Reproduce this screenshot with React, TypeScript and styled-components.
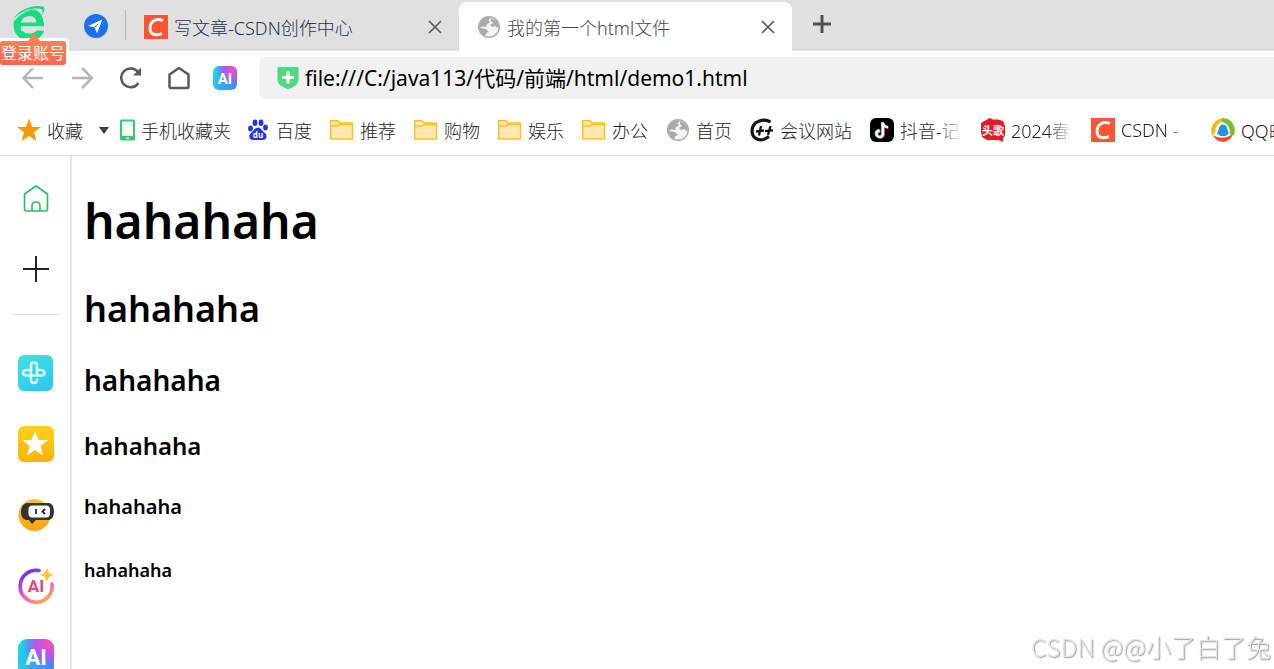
import React from 'react';
import styled, { createGlobalStyle } from 'styled-components';

const GlobalStyle = createGlobalStyle`
  * { box-sizing: border-box; }
  body { margin: 0; background: #fff; overflow: hidden; font-family: "Noto Sans", "Noto Sans CJK SC", sans-serif; }
  button, input { font: inherit; color: inherit; border: 0; padding: 0; background: none; }
  button { cursor: pointer; display: flex; align-items: center; justify-content: center; }
  svg { display: block; flex: none; }
`;

const Shell = styled.div`
  display: flex;
  flex-direction: column;
  height: 100vh;
  overflow: hidden;
`;

const TabStrip = styled.header`
  display: flex;
  height: 51px;
  flex: none;
  background: #e0e0e0;
`;

const Account = styled.div`
  position: relative;
  width: 84px;
  padding: 5px 0 0 12px;
`;

const LoginBadge = styled.button`
  && {
    position: absolute;
    left: -3px;
    top: 38px;
    z-index: 2;
    width: 72px;
    height: 30px;
    color: #fff;
    font-size: 16px;
    line-height: 24px;
    white-space: nowrap;
    border: 3px solid #fff;
    border-radius: 5px;
    background: linear-gradient(#ff8150, #ff6650);
    background-clip: padding-box;
  }
  &::before {
    content: "";
    position: absolute;
    left: 28px;
    top: -8px;
    border: 6px solid transparent;
    border-top: 0;
    border-bottom: 8px solid #ff8150;
  }
`;

const PinnedTab = styled.div`
  display: flex;
  align-items: center;
  width: 41px;
`;

const Tab = styled.div<{ $active?: boolean }>`
  display: flex;
  align-items: center;
  gap: 6px;
  width: 333px;
  margin-top: ${(p) => (p.$active ? 2 : 0)}px;
  padding: ${(p) => (p.$active ? '0 17px 0 18px' : '2px 17px 0 18px')};
  border-radius: 8px 8px 0 0;
  background: ${(p) => (p.$active ? '#fff' : 'transparent')};
  color: ${(p) => (p.$active ? '#48484e' : '#24344f')};
  font-size: 18px;
  font-weight: 300;
`;

const Separator = styled.span`
  width: 1px;
  height: 30px;
  margin-top: 10px;
  background: #b8b8b8;
`;

const TabTitle = styled.span`
  flex: 1;
  white-space: nowrap;
  overflow: hidden;
`;

const NewTab = styled.button`
  width: 60px;
  height: 48px;
`;

const Toolbar = styled.nav`
  display: flex;
  align-items: center;
  flex: none;
  height: 54px;
  padding-left: 21px;
`;

const ToolButton = styled.button<{ $width: number }>`
  width: ${(p) => p.$width}px;
  height: 40px;
  && { justify-content: flex-start; }
`;

const AddressBar = styled.label`
  display: flex;
  align-items: center;
  flex: 1;
  gap: 5px;
  height: 42px;
  padding-left: 17px;
  border-radius: 6px 0 0 6px;
  background: #f1f1f1;
`;

const AddressInput = styled.input`
  flex: 1;
  min-width: 0;
  && { font-size: 21px; color: #000; padding-bottom: 2px; }
  outline: none;
`;

const Bookmarks = styled.nav`
  display: flex;
  align-items: center;
  flex: none;
  height: 51px;
  padding-left: 17px;
  border-bottom: 1px solid #e0e0e0;
  color: #1c1c1c;
  font-size: 18px;
  font-weight: 300;
  overflow: hidden;
`;

const Favorites = styled.button`
  && { justify-content: flex-start; }
  gap: 6px;
  width: 100px;
  flex: none;
`;

const Caret = styled.span`
  margin-left: 10px;
  border: 5px solid transparent;
  border-top: 7px solid #3c3c3c;
  border-bottom: 0;
`;

const BookmarkList = styled.div`
  display: flex;
  gap: 18px;
  padding-left: 15px;
`;

const Bookmark = styled.a`
  display: flex;
  align-items: center;
  gap: 6px;
  flex: none;
  color: inherit;
  text-decoration: none;
`;

const BookmarkLabel = styled.span<{ $width?: number }>`
  width: ${(p) => (p.$width ? `${p.$width}px` : 'auto')};
  padding-bottom: 1px;
  white-space: nowrap;
  overflow: hidden;
  mask-image: ${(p) => (p.$width ? 'linear-gradient(90deg, #000 60%, transparent)' : 'none')};
`;

const Workspace = styled.div`
  display: flex;
  flex: 1;
  min-height: 0;
`;

const Sidebar = styled.aside`
  display: flex;
  flex-direction: column;
  align-items: center;
  width: 72px;
  flex: none;
  padding-left: 2px;
  border-right: 2px solid #e6e6e6;
  overflow: hidden;
`;

const SideActions = styled.div`
  display: flex;
  flex-direction: column;
  gap: 34px;
  padding: 25px 0 27px;
`;

const SideButton = styled.button`
  width: 36px;
  height: 36px;
  flex: none;
`;

const Divider = styled.hr`
  width: 48px;
  flex: none;
  margin: 0;
  border: 0;
  border-top: 1px solid #e0e0e0;
`;

const SideApps = styled.div`
  display: flex;
  flex-direction: column;
  gap: 35px;
  padding-top: 40px;
`;

const Page = styled.main`
  flex: 1;
  padding: 35px 12px;
  color: #000;
`;

const Heading = styled.h1<{ $size: number; $line: number; $gap: number }>`
  margin: 0 0 ${(p) => p.$gap}px;
  font-size: ${(p) => p.$size}px;
  line-height: ${(p) => p.$line}px;
  font-weight: 600;
`;

const Watermark = styled.div`
  position: fixed;
  right: 3px;
  bottom: 5px;
  color: #e4e4e4;
  font: 300 25px/36px "Noto Sans CJK SC", sans-serif;
  text-shadow: 1px 1px 1px #9c9c9c;
  white-space: nowrap;
`;

const BrowserLogo = () => (
  <svg width="36" height="36" viewBox="0 0 36 36" fill="none">
    <path d="M28 18.500C28 11 24 7.500 17.500 7.500C10 7.500 5 13 5 20C5 28 11 32 17 32C23 32 27 30 29 25" stroke="#16dc82" strokeWidth="7" />
    <path d="M8 17.500H32V21.500H8Z" fill="#16dc82" />
    <path d="M9 21.500H33V25.500H9Z" fill="#e0e0e0" />
    <path d="M1 16C7 8 17 3 27 3" stroke="#e0e0e0" strokeWidth="1.500" />
    <path d="M1 14C7 5 20-1 31 1.500C34 3 32 8 29 11C31 7 31 5 29 4C20 2 9 6 1 14Z" fill="#16dc82" />
  </svg>
);

const SendIcon = () => (
  <svg width="24" height="24" viewBox="0 0 24 24">
    <circle cx="12" cy="12" r="12" fill="#1d70f0" />
    <path d="M18.300 5.500L4 12L10.500 13.200L13 19.500Z" fill="#fff" />
    <path d="M10.500 13.200L14 10" stroke="#1d70f0" />
  </svg>
);

const CsdnIcon = () => (
  <svg width="24" height="24" viewBox="0 0 24 24" fill="none">
    <path d="M0 0H24V24H0Z" fill="#fc5531" />
    <path d="M19 5.500C12 2.500 6.200 6.500 6 13C5.800 19.500 11 21 18 18.700" stroke="#fff" strokeWidth="2.900" />
  </svg>
);

const GlobeIcon = () => (
  <svg width="24" height="24" viewBox="0 0 24 24">
    <circle cx="12" cy="12" r="10.300" fill="#f3f3f3" stroke="#ababab" strokeWidth="1.400" />
    <path d="M2 11C2 6 6 2 11 2L14 3L11.500 5L13 7.500L10 9L9 12L5 11.500L3 13L9 14L12 17L9.500 18L8 21C4 19 2 15 2 11ZM14 3L20 6L22 12L21 13L18 11L15 12L13 10L16 8L14 6Z" fill="#ababab" />
  </svg>
);

const CloseIcon = () => (
  <svg width="14" height="14" viewBox="0 0 14 14">
    <path d="M1 1L13 13M13 1L1 13" stroke="#5c5c5c" strokeWidth="1.700" />
  </svg>
);

const ArrowIcon = ({ forward }: { forward?: boolean }) => (
  <svg width="24" height="24" viewBox="0 0 24 24" fill="none">
    <path
      d={forward ? 'M1 12H21M11 2L21 12L11 22' : 'M2 12H22M12 2L2.500 12L12 22'}
      stroke="#b5b5b5"
      strokeWidth="2.500"
    />
  </svg>
);

const ReloadIcon = () => (
  <svg width="24" height="24" viewBox="0 0 24 24" fill="none">
    <path d="M18 6A9.400 9.400 0 1 0 18.500 17" stroke="#5a5a5a" strokeWidth="2.600" />
    <path d="M21 1.500V9.500H13Z" fill="#5a5a5a" />
  </svg>
);

const HomeOutlineIcon = () => (
  <svg width="24" height="24" viewBox="0 0 24 24" fill="none">
    <path d="M1.500 8.500L11 2L20.500 8.500V20.500Q20.500 22 19 22H3Q1.500 22 1.500 20.500Z" stroke="#5a5a5a" strokeWidth="2.500" strokeLinejoin="round" />
  </svg>
);

const AiTileIcon = ({ size, id }: { size: number; id: string }) => (
  <svg width={size} height={size} viewBox="0 0 24 24">
    <defs>
      <linearGradient id={`${id}-base`} x1="0" y1="0.3" x2="1" y2="0.6">
        <stop offset="0" stopColor="#18dce4" />
        <stop offset="0.5" stopColor="#35a6f8" />
        <stop offset="1" stopColor="#3f8dfb" />
      </linearGradient>
      <radialGradient id={`${id}-glow`} cx="0.85" cy="0.1" r="0.75">
        <stop offset="0" stopColor="#fb4fb0" />
        <stop offset="0.5" stopColor="#c44df0" stopOpacity="0.9" />
        <stop offset="1" stopColor="#8068f8" stopOpacity="0" />
      </radialGradient>
    </defs>
    <rect width="24" height="24" rx="6" fill={`url(#${id}-base)`} />
    <rect width="24" height="24" rx="6" fill={`url(#${id}-glow)`} />
    <text x="12" y="17.500" fill="#fff" fontSize="15" fontWeight="700" fontFamily="Roboto, sans-serif" textAnchor="middle">AI</text>
  </svg>
);

const ShieldIcon = () => (
  <svg width="24" height="24" viewBox="0 0 24 24">
    <path d="M1.500 1H22.500V14C22.500 19 17 21 12 23.500C7 21 1.500 19 1.500 14Z" fill="#4cda82" />
    <path d="M12 5.500V17.500M6 11.500H18" stroke="#fff" strokeWidth="3" />
  </svg>
);

const StarIcon = () => (
  <svg width="24" height="24" viewBox="0 0 24 24">
    <path d="M12 0.500L15.300 9H24L17 14.300L19.500 23L12 18L4.500 23L7 14.300L0 9H8.700Z" fill="#ff9800" />
  </svg>
);

const PhoneIcon = () => (
  <svg width="18" height="24" viewBox="0 0 18 24">
    <rect x="3" y="1.500" width="15" height="21" rx="1.500" fill="#3dc670" />
    <rect x="5" y="3.500" width="11" height="14.500" fill="#f2fbf5" />
    <rect x="9" y="19.500" width="3" height="1.500" fill="#fff" />
  </svg>
);

const PawIcon = () => (
  <svg width="24" height="24" viewBox="0 0 24 24" fill="#2a32dc">
    <ellipse cx="4.500" cy="10.500" rx="2.400" ry="3" />
    <ellipse cx="9" cy="4.800" rx="2.400" ry="3.200" />
    <ellipse cx="15" cy="4.800" rx="2.400" ry="3.200" />
    <ellipse cx="19.500" cy="9.500" rx="2.400" ry="3" />
    <path d="M12 9.500C15 9.500 16 13 19 15C22 17.500 20.500 22 16.500 22H7C3 22 2 17.500 5 15C8 13 9 9.500 12 9.500Z" />
    <text x="12" y="20" fontSize="8" fontWeight="700" fill="#fff" textAnchor="middle" fontFamily="Open Sans, sans-serif">du</text>
  </svg>
);

const FolderIcon = () => (
  <svg width="24" height="24" viewBox="0 0 24 24">
    <path d="M0.700 21V2.700H8L10 5H22.500V21H0.700Z" fill="#ffe9b0" stroke="#fcbf20" strokeWidth="1.400" strokeLinejoin="round" />
    <path d="M1 8H8.500L10 6.500H22" stroke="#fcbf20" strokeWidth="1.300" fill="none" />
  </svg>
);

const CppIcon = () => (
  <svg width="24" height="24" viewBox="0 0 24 24" fill="none" stroke="#10131c">
    <path d="M20.500 4C14 0 2 3 2 13C2 21 11 25 19 18.500" strokeWidth="3.200" />
    <path d="M6 13.500L14 12.500M11 8L9 17.500M15 12.800L23 12.300M20.500 8L18 17" strokeWidth="2.300" />
  </svg>
);

const TikTokIcon = () => (
  <svg width="24" height="24" viewBox="0 0 24 24" fill="none">
    <rect width="24" height="24" rx="6" fill="#000" />
    <path d="M12.200 4V15.500A3.200 3.200 0 1 1 9 12.200M12.200 4C12.500 7 14.500 8.600 17.500 8.800" stroke="#25f4ee" strokeWidth="2.400" />
    <path d="M13.800 5.200V16.500A3.200 3.200 0 1 1 10.600 13.200M13.800 5.200C14.100 8 16.100 9.600 18.700 9.800" stroke="#fe2c55" strokeWidth="2.400" />
    <path d="M13 4.600V16A3.200 3.200 0 1 1 9.800 12.700M13 4.600C13.300 7.600 15.300 9 18 9.300" stroke="#fff" strokeWidth="2.200" />
  </svg>
);

const TougeIcon = () => (
  <svg width="24" height="24" viewBox="0 0 24 24">
    <path d="M5 2L9 0L12 1.500H17L22 3L24 8V18L22 20V24L17 22H6L1 19L0 14V5Z" fill="#e01f24" />
    <text x="12" y="16.500" fontSize="11" fontWeight="700" fill="#fff" textAnchor="middle" fontFamily="Noto Sans CJK SC, sans-serif">头歌</text>
  </svg>
);

const QqIcon = () => (
  <svg width="24" height="24" viewBox="0 0 24 24" fill="none">
    <path d="M1 18C-2 9 4 1 12 0L14 3C8 4 4 8 4.500 14Z" fill="#fbb616" />
    <path d="M11 0.500C20-1 26 9 23 17L19 18C20 11 17 5 11 4Z" fill="#75bf25" />
    <path d="M2 17C8 21 14 20 21.500 17C18 26 6 26 2 17Z" fill="#f3471c" />
    <path d="M7 16C5.500 17 6.500 13 8 11C8 5 16 5 16 11C17.500 13 18.500 17 17 16L14.500 18H9.500Z" fill="#1f93df" />
  </svg>
);

const SideHomeIcon = () => (
  <svg width="26" height="30" viewBox="0 0 26 30" fill="none" stroke="#1fc063" strokeWidth="1.600" strokeLinejoin="round">
    <path d="M1.500 10L13 2L24.500 10V25Q24.500 27 22.500 27H3.500Q1.500 27 1.500 25Z" />
    <path d="M9 27V22Q9 18 13 18Q17 18 17 22V27" />
  </svg>
);

const PlusIcon = ({ size, weight, color }: { size: number; weight: number; color: string }) => (
  <svg width={size} height={size} viewBox={`0 0 ${size} ${size}`}>
    <path d={`M0 ${size / 2}H${size}M${size / 2} 0V${size}`} stroke={color} strokeWidth={weight} />
  </svg>
);

const HealthIcon = () => (
  <svg width="36" height="36" viewBox="0 0 36 36" fill="none">
    <defs>
      <linearGradient id="health" x1="0" y1="0" x2="0.6" y2="1">
        <stop offset="0" stopColor="#46dfe0" />
        <stop offset="1" stopColor="#2bcbf0" />
      </linearGradient>
    </defs>
    <rect width="35" height="36" rx="6" fill="url(#health)" />
    <path d="M19 20.500V10.500Q19 7.500 16 7.500Q13 7.500 13 10.500V24.500Q13 28 16 28Q19 28 19 24.500M13 15H8.500Q5 15 5 18Q5 20.500 8.500 20.500H23Q26.500 20.500 26.500 18Q26.500 15 23 15H19" stroke="#d4f7fc" strokeWidth="2.600" strokeLinecap="round" />
  </svg>
);

const StarTileIcon = () => (
  <svg width="36" height="36" viewBox="0 0 36 36">
    <defs>
      <linearGradient id="gold" x1="0" y1="0" x2="0" y2="1">
        <stop offset="0" stopColor="#ffd21a" />
        <stop offset="1" stopColor="#ffb20a" />
      </linearGradient>
    </defs>
    <rect width="36" height="36" rx="6" fill="url(#gold)" />
    <path d="M17 5L20.500 14H30L22.500 20L25 29.500L17 24L9 29.500L11.500 20L4.500 14H13.500Z" fill="#fff" />
  </svg>
);

const RobotIcon = () => (
  <svg width="36" height="36" viewBox="0 0 36 36">
    <defs>
      <linearGradient id="amber" x1="0" y1="0" x2="0" y2="1">
        <stop offset="0" stopColor="#ffc72b" />
        <stop offset="1" stopColor="#f7a316" />
      </linearGradient>
    </defs>
    <circle cx="16.500" cy="18" r="16" fill="url(#amber)" />
    <path d="M9 6H31Q36 7 36 14.500Q36 22 31 23H18L14 27L11 23H8Q3 22 3 14.500Q3 7 9 6Z" fill="#343434" />
    <rect x="10.500" y="8.500" width="21.500" height="12" rx="4" fill="#fff" />
    <path d="M18 12V17M27 12L24.500 14.500L27 17" stroke="#222" strokeWidth="1.800" fill="none" />
  </svg>
);

const AiRingIcon = () => (
  <svg width="36" height="36" viewBox="0 0 36 36" fill="none">
    <defs>
      <linearGradient id="ring" x1="0.2" y1="0" x2="0.8" y2="1">
        <stop offset="0" stopColor="#5535ed" />
        <stop offset="0.5" stopColor="#ed4bea" />
        <stop offset="1" stopColor="#ffac3f" />
      </linearGradient>
    </defs>
    <path d="M21 2.500A16 16 0 1 0 34 16" stroke="url(#ring)" strokeWidth="3.600" strokeLinecap="round" />
    <path d="M29 0L31 5L35.500 7L31 9L29 13.500L26.500 9L22 7L26.500 5Z" fill="#ffc928" />
    <text x="18" y="24" fontSize="17" fontWeight="700" fill="#ee3f88" textAnchor="middle" fontFamily="Roboto, sans-serif">AI</text>
  </svg>
);

const bookmarks = [
  { label: '百度', icon: <PawIcon /> },
  { label: '推荐', icon: <FolderIcon /> },
  { label: '购物', icon: <FolderIcon /> },
  { label: '娱乐', icon: <FolderIcon /> },
  { label: '办公', icon: <FolderIcon /> },
  { label: '首页', icon: <GlobeIcon /> },
  { label: '会议网站', icon: <CppIcon /> },
  { label: '抖音-记', icon: <TikTokIcon />, width: 63 },
  { label: '2024春', icon: <TougeIcon />, width: 62 },
  { label: 'CSDN -', icon: <CsdnIcon />, width: 72 },
  { label: 'QQ邮箱', icon: <QqIcon /> },
];

const headings = [
  { as: 'h1', size: 48, line: 60, gap: 34 },
  { as: 'h2', size: 36, line: 48, gap: 29 },
  { as: 'h3', size: 28, line: 36, gap: 33 },
  { as: 'h4', size: 24, line: 30, gap: 33 },
  { as: 'h5', size: 20, line: 26, gap: 38 },
  { as: 'h6', size: 18, line: 24, gap: 0 },
] as const;

export default function App() {
  return (
    <Shell>
      <GlobalStyle />
      <TabStrip>
        <Account>
          <BrowserLogo />
          <LoginBadge>登录账号</LoginBadge>
        </Account>
        <PinnedTab><SendIcon /></PinnedTab>
        <Separator />
        <Tab>
          <CsdnIcon />
          <TabTitle>写文章-CSDN创作中心</TabTitle>
          <button aria-label="关闭"><CloseIcon /></button>
        </Tab>
        <Tab $active>
          <GlobeIcon />
          <TabTitle>我的第一个html文件</TabTitle>
          <button aria-label="关闭"><CloseIcon /></button>
        </Tab>
        <NewTab aria-label="新标签页"><PlusIcon size={18} weight={3} color="#505050" /></NewTab>
      </TabStrip>
      <Toolbar>
        <ToolButton $width={50} aria-label="后退"><ArrowIcon /></ToolButton>
        <ToolButton $width={49} aria-label="前进"><ArrowIcon forward /></ToolButton>
        <ToolButton $width={48} aria-label="刷新"><ReloadIcon /></ToolButton>
        <ToolButton $width={45} aria-label="主页"><HomeOutlineIcon /></ToolButton>
        <ToolButton $width={46} aria-label="AI"><AiTileIcon size={24} id="nav-ai" /></ToolButton>
        <AddressBar>
          <ShieldIcon />
          <AddressInput aria-label="地址" defaultValue="file:///C:/java113/代码/前端/html/demo1.html" />
        </AddressBar>
      </Toolbar>
      <Bookmarks>
        <Favorites><StarIcon />收藏<Caret /></Favorites>
        <Bookmark href="#"><PhoneIcon /><BookmarkLabel>手机收藏夹</BookmarkLabel></Bookmark>
        <BookmarkList>
          {bookmarks.map((b) => (
            <Bookmark href="#" key={b.label}>
              {b.icon}
              <BookmarkLabel $width={b.width}>{b.label}</BookmarkLabel>
            </Bookmark>
          ))}
        </BookmarkList>
      </Bookmarks>
      <Workspace>
        <Sidebar>
          <SideActions>
            <SideButton aria-label="首页"><SideHomeIcon /></SideButton>
            <SideButton aria-label="添加"><PlusIcon size={26} weight={2} color="#222" /></SideButton>
          </SideActions>
          <Divider />
          <SideApps>
            <SideButton aria-label="健康"><HealthIcon /></SideButton>
            <SideButton aria-label="收藏"><StarTileIcon /></SideButton>
            <SideButton aria-label="助手"><RobotIcon /></SideButton>
            <SideButton aria-label="AI 创作"><AiRingIcon /></SideButton>
            <SideButton aria-label="AI"><AiTileIcon size={36} id="side-ai" /></SideButton>
          </SideApps>
        </Sidebar>
        <Page>
          {headings.map((h) => (
            <Heading as={h.as} key={h.as} $size={h.size} $line={h.line} $gap={h.gap}>hahahaha</Heading>
          ))}
        </Page>
      </Workspace>
      <Watermark>CSDN @@小了白了兔</Watermark>
    </Shell>
  );
}
